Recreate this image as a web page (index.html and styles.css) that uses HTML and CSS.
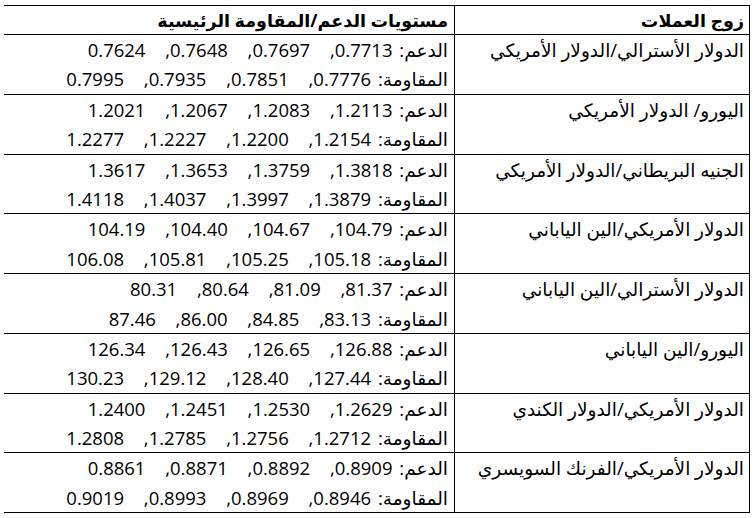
FILE: index.html
```html
<!DOCTYPE html>
<html lang="ar" dir="rtl">
<head>
<meta charset="utf-8">
<title>مستويات الدعم والمقاومة</title>
<link rel="stylesheet" href="styles.css">
</head>
<body>
<table class="levels">
  <thead>
    <tr>
      <th class="pair">زوج العملات</th>
      <th class="vals">مستويات الدعم/المقاومة الرئيسية</th>
    </tr>
  </thead>
  <tbody>
    <tr>
      <td class="pair">الدولار الأسترالي/الدولار الأمريكي</td>
      <td class="vals">
        <div class="line">الدعم: <span class="nums">0.7713, 0.7697, 0.7648, 0.7624</span></div>
        <div class="line">المقاومة: <span class="nums">0.7776, 0.7851, 0.7935, 0.7995</span></div>
      </td>
    </tr>
    <tr>
      <td class="pair">اليورو/ الدولار الأمريكي</td>
      <td class="vals">
        <div class="line">الدعم: <span class="nums">1.2113, 1.2083, 1.2067, 1.2021</span></div>
        <div class="line">المقاومة: <span class="nums">1.2154, 1.2200, 1.2227, 1.2277</span></div>
      </td>
    </tr>
    <tr>
      <td class="pair">الجنيه البريطاني/الدولار الأمريكي</td>
      <td class="vals">
        <div class="line">الدعم: <span class="nums">1.3818, 1.3759, 1.3653, 1.3617</span></div>
        <div class="line">المقاومة: <span class="nums">1.3879, 1.3997, 1.4037, 1.4118</span></div>
      </td>
    </tr>
    <tr>
      <td class="pair">الدولار الأمريكي/الين الياباني</td>
      <td class="vals">
        <div class="line">الدعم: <span class="nums">104.79, 104.67, 104.40, 104.19</span></div>
        <div class="line">المقاومة: <span class="nums">105.18, 105.25, 105.81, 106.08</span></div>
      </td>
    </tr>
    <tr>
      <td class="pair">الدولار الأسترالي/الين الياباني</td>
      <td class="vals">
        <div class="line">الدعم: <span class="nums">81.37, 81.09, 80.64, 80.31</span></div>
        <div class="line">المقاومة: <span class="nums">83.13, 84.85, 86.00, 87.46</span></div>
      </td>
    </tr>
    <tr>
      <td class="pair">اليورو/الين الياباني</td>
      <td class="vals">
        <div class="line">الدعم: <span class="nums">126.88, 126.65, 126.43, 126.34</span></div>
        <div class="line">المقاومة: <span class="nums">127.44, 128.40, 129.12, 130.23</span></div>
      </td>
    </tr>
    <tr>
      <td class="pair">الدولار الأمريكي/الدولار الكندي</td>
      <td class="vals">
        <div class="line">الدعم: <span class="nums">1.2629, 1.2530, 1.2451, 1.2400</span></div>
        <div class="line">المقاومة: <span class="nums">1.2712, 1.2756, 1.2785, 1.2808</span></div>
      </td>
    </tr>
    <tr>
      <td class="pair">الدولار الأمريكي/الفرنك السويسري</td>
      <td class="vals">
        <div class="line">الدعم: <span class="nums">0.8909, 0.8892, 0.8871, 0.8861</span></div>
        <div class="line">المقاومة: <span class="nums">0.8946, 0.8969, 0.8993, 0.9019</span></div>
      </td>
    </tr>
  </tbody>
</table>
</body>
</html>
```

FILE: styles.css
```css
html, body {
  background: #ffffff;
}

body {
  margin: 5px 4px 0 4px;
  font-family: "Open Sans", "DejaVu Sans", sans-serif;
  font-size: 18.5px;
  color: #000000;
}

.levels {
  border-collapse: collapse;
  width: 747px;
}

.levels th,
.levels td {
  border: 1px solid #000000;
  vertical-align: top;
  text-align: right;
  padding: 0 6px 0 6px;
}

.levels th {
  font-weight: bold;
  font-size: 17.5px;
  line-height: 28px;
  height: 28px;
}

.levels th.pair,
.levels td.pair {
  width: 283px;
  padding-right: 5px;
}

.levels td {
  line-height: 29.4px;
}

.line {
  height: 29.4px;
  white-space: nowrap;
  word-spacing: 2px;
}

.nums {
  word-spacing: 15px;
}
```
